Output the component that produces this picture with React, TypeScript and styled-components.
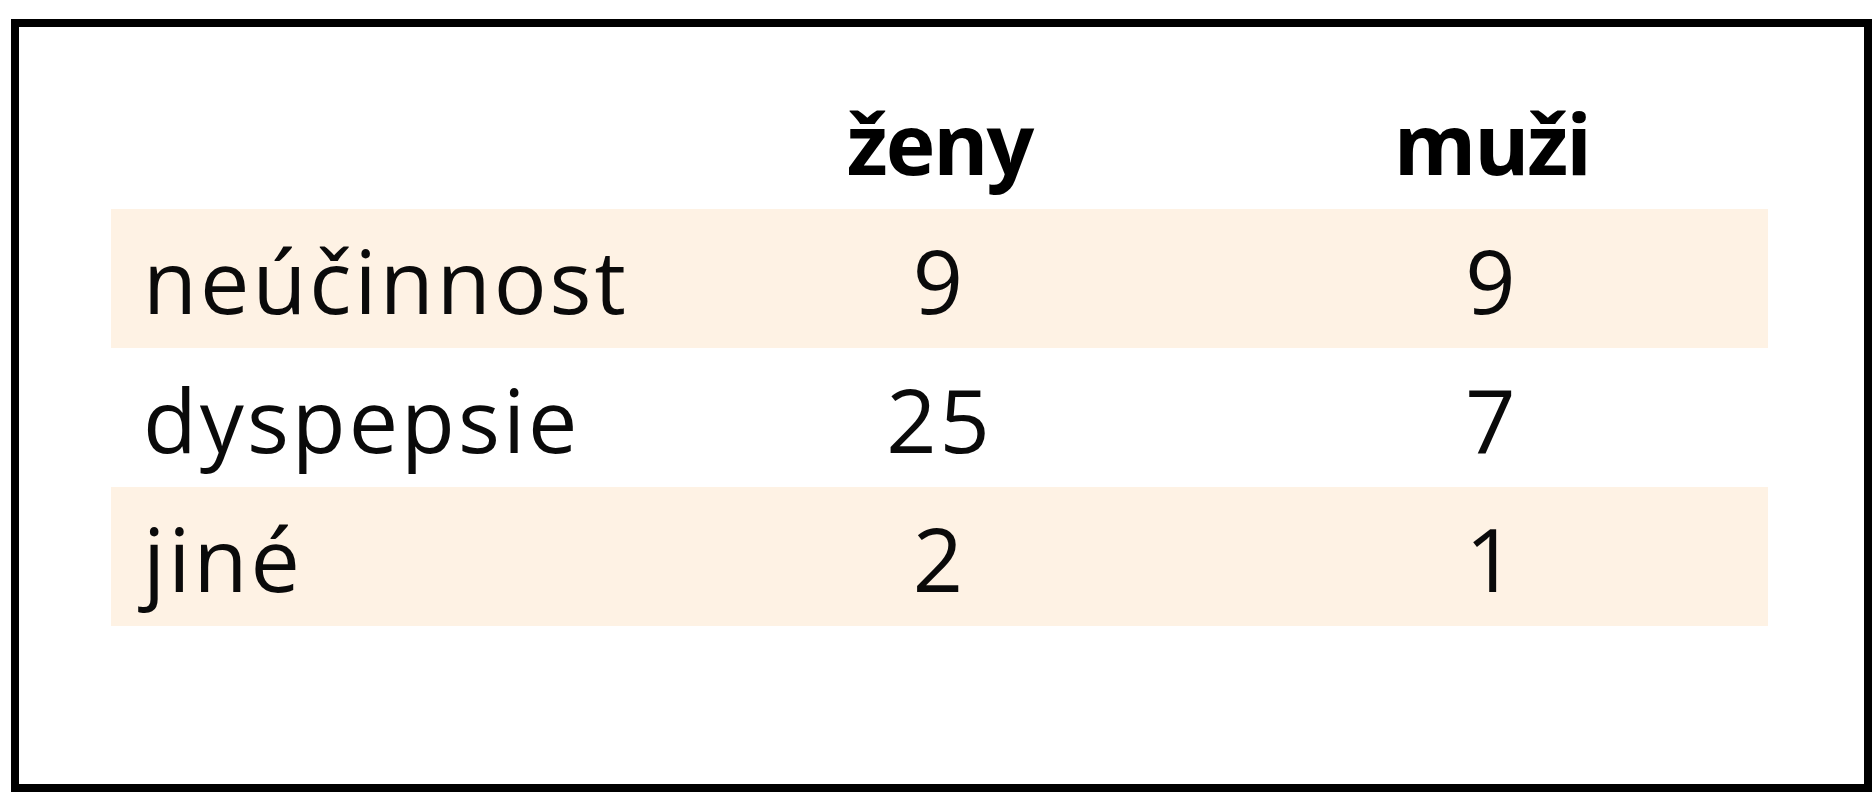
import React from "react";
import styled, { createGlobalStyle } from "styled-components";

const GlobalStyle = createGlobalStyle`
  html, body {
    margin: 0;
    padding: 0;
    background: #ffffff;
  }
  body {
    font-family: "Open Sans", "Noto Sans", sans-serif;
  }
`;

const Page = styled.div`
  padding: 19px 0 0 11px;
`;

const Frame = styled.div`
  box-sizing: border-box;
  width: 1861px;
  height: 773px;
  border: 8px solid #000000;
  background: #ffffff;
  padding: 0 96px 0 92px;
`;

const Table = styled.div`
  display: flex;
  flex-direction: column;
`;

const Row = styled.div<{ $shaded?: boolean; $header?: boolean }>`
  display: grid;
  grid-template-columns: 1fr 1fr 1fr;
  align-items: ${(p) => (p.$header ? "end" : "start")};
  height: ${(p) => (p.$header ? "182px" : "139px")};
  box-sizing: border-box;
  padding: ${(p) => (p.$header ? "0 0 9px 0" : "5px 0 0 0")};
  background: ${(p) => (p.$shaded ? "#fef2e4" : "transparent")};
  font-size: ${(p) => (p.$header ? "84px" : "88px")};
  line-height: ${(p) => (p.$header ? "normal" : "133px")};
  color: #0a0a0a;
`;

const Label = styled.div`
  padding-left: 32px;
  letter-spacing: 3px;
`;

const Value = styled.div`
  text-align: center;
  letter-spacing: 3px;
`;

const Head = styled.div`
  text-align: center;
  font-weight: 700;
  letter-spacing: -2px;
  color: #000000;
`;

const rows = [
  { label: "neúčinnost", zeny: "9", muzi: "9" },
  { label: "dyspepsie", zeny: "25", muzi: "7" },
  { label: "jiné", zeny: "2", muzi: "1" },
];

export default function App() {
  return (
    <>
      <GlobalStyle />
      <Page>
        <Frame>
          <Table>
            <Row $header>
              <div />
              <Head>ženy</Head>
              <Head>muži</Head>
            </Row>
            {rows.map((r, i) => (
              <Row key={r.label} $shaded={i % 2 === 0}>
                <Label>{r.label}</Label>
                <Value>{r.zeny}</Value>
                <Value>{r.muzi}</Value>
              </Row>
            ))}
          </Table>
        </Frame>
      </Page>
    </>
  );
}
